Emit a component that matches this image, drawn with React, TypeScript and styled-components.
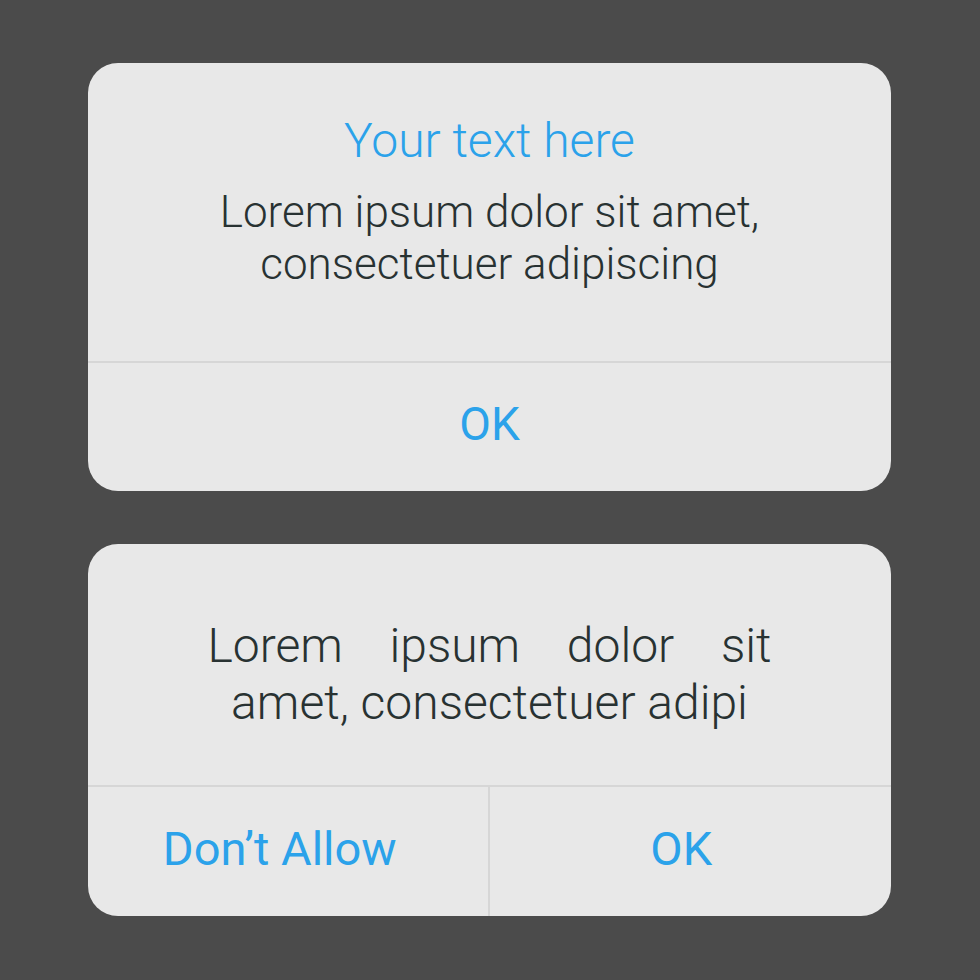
import React from "react";
import styled, { createGlobalStyle } from "styled-components";

const GlobalStyle = createGlobalStyle`
    html, body {
        margin: 0;
        padding: 0;
        background: #4b4b4b;
        font-family: Roboto, "Noto Sans", "Liberation Sans", sans-serif;
    }
`

const Page = styled.div`
    width: 980px;
    height: 980px;
    box-sizing: border-box;
    padding: 63px 89px 0 88px;
    display: flex;
    flex-direction: column;
    gap: 53px;
`

const Card = styled.div`
    background: #e8e8e8;
    border-radius: 30px;
    overflow: hidden;
    display: flex;
    flex-direction: column;
`

const Content = styled.div<{ $height: number; $top: number }>`
    height: ${p => p.$height}px;
    box-sizing: border-box;
    padding-top: ${p => p.$top}px;
    border-bottom: 2px solid #d6d6d6;
    display: flex;
    flex-direction: column;
    align-items: center;
`

const Title = styled.div`
    color: #2ba2ea;
    font-size: 48px;
    font-weight: 300;
    line-height: 56px;
    margin-bottom: 17px;
`

const Message = styled.div<{ $size: number; $line: number }>`
    color: #283232;
    font-size: ${p => p.$size}px;
    font-weight: 300;
    line-height: ${p => p.$line}px;
    text-align: center;
`

const Justified = styled(Message)`
    width: 564px;
    text-align: justify;
    text-align-last: center;
`

const Footer = styled.div<{ $height: number }>`
    height: ${p => p.$height}px;
    display: flex;
`

const Action = styled.div<{ $size: number; $shift?: number; $divider?: boolean }>`
    flex: 1;
    display: flex;
    align-items: center;
    justify-content: center;
    color: #2ba2ea;
    font-size: ${p => p.$size}px;
    line-height: 1;
    padding-right: ${p => p.$shift || 0}px;
    padding-bottom: 6px;
    border-right: ${p => (p.$divider ? "2px solid #d6d6d6" : "none")};
`

export default function App() {
    return (
        <>
            <GlobalStyle />
            <Page>
                <Card>
                    <Content $height={300} $top={50}>
                        <Title>Your text here</Title>
                        <Message $size={44} $line={52}>
                            Lorem ipsum dolor sit amet,<br />
                            consectetuer adipiscing
                        </Message>
                    </Content>
                    <Footer $height={128}>
                        <Action $size={46}>OK</Action>
                    </Footer>
                </Card>
                <Card>
                    <Content $height={243} $top={73}>
                        <Justified $size={48} $line={57}>
                            Lorem ipsum dolor sit amet, consectetuer adipi
                        </Justified>
                    </Content>
                    <Footer $height={129}>
                        <Action $size={47} $shift={16} $divider>Don’t Allow</Action>
                        <Action $size={47} $shift={18}>OK</Action>
                    </Footer>
                </Card>
            </Page>
        </>
    );
}
